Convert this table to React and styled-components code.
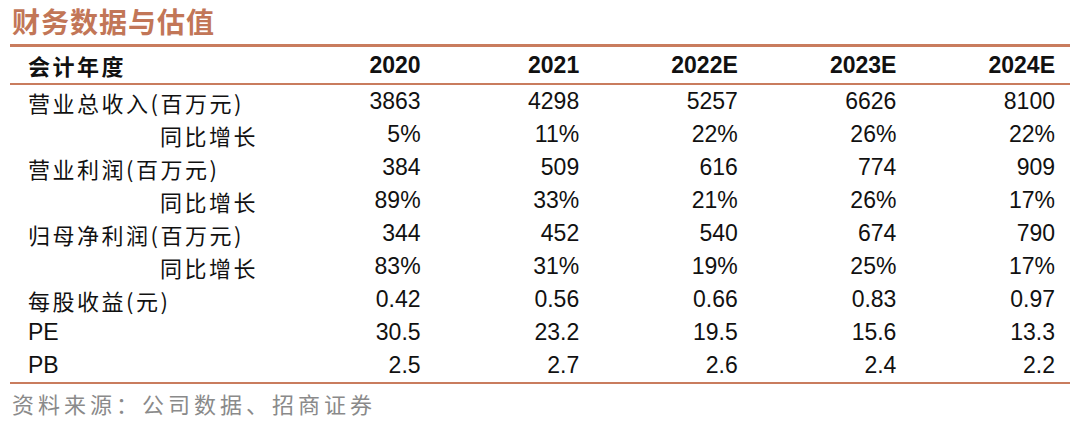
import React from 'react';
import styled, { createGlobalStyle } from 'styled-components';

const GlobalStyle = createGlobalStyle`
  html, body {
    margin: 0;
    padding: 0;
    background: #ffffff;
  }
`;

const Page = styled.div`
  width: 1080px;
  height: 421px;
  padding: 4px 10px 0 10px;
  box-sizing: border-box;
  background: #fff;
  font-family: "Liberation Sans", Arial, "Noto Sans CJK SC", sans-serif;
  color: #111;
`;

const Title = styled.h2`
  margin: 0 0 0 2px;
  height: 40px;
  line-height: 34px;
  font-family: "Noto Sans CJK SC", sans-serif;
  font-size: 28px;
  font-weight: 700;
  letter-spacing: 1px;
  color: #c27657;
`;

const Table = styled.div`
  border-top: 3px solid #c97c5e;
  border-bottom: 2px solid #c97c5e;
`;

const Row = styled.div`
  display: grid;
  grid-template-columns: 252px repeat(5, 1fr);
  padding-right: 15px;
  height: ${p => (p.$head ? '36px' : '33px')};
  align-items: center;
  border-bottom: ${p => (p.$head ? '2px solid #c97c5e' : 'none')};
`;

const Label = styled.div`
  padding-left: ${p => (p.$indent ? '150px' : '18px')};
  font-family: ${p => (p.$latin ? '"Liberation Sans", Arial, sans-serif' : '"Noto Sans CJK SC", sans-serif')};
  font-size: ${p => (p.$latin ? '23px' : '22px')};
  letter-spacing: ${p => (p.$latin ? '0' : '2.5px')};
  font-weight: ${p => (p.$bold ? 700 : 400)};
  white-space: nowrap;
  color: #111;
`;

const Cell = styled.div`
  text-align: right;
  font-size: 23px;
  font-weight: ${p => (p.$bold ? 700 : 400)};
  color: #111;
`;

const Source = styled.div`
  margin-top: 3px;
  padding-left: 2px;
  font-family: "Noto Sans CJK SC", sans-serif;
  font-size: 22px;
  letter-spacing: 4px;
  color: #8a8a8a;
`;

const years = ['2020', '2021', '2022E', '2023E', '2024E'];

const rows = [
  { label: '营业总收入(百万元)', values: ['3863', '4298', '5257', '6626', '8100'] },
  { label: '同比增长', indent: true, values: ['5%', '11%', '22%', '26%', '22%'] },
  { label: '营业利润(百万元)', values: ['384', '509', '616', '774', '909'] },
  { label: '同比增长', indent: true, values: ['89%', '33%', '21%', '26%', '17%'] },
  { label: '归母净利润(百万元)', values: ['344', '452', '540', '674', '790'] },
  { label: '同比增长', indent: true, values: ['83%', '31%', '19%', '25%', '17%'] },
  { label: '每股收益(元)', values: ['0.42', '0.56', '0.66', '0.83', '0.97'] },
  { label: 'PE', latin: true, values: ['30.5', '23.2', '19.5', '15.6', '13.3'] },
  { label: 'PB', latin: true, values: ['2.5', '2.7', '2.6', '2.4', '2.2'] },
];

export default function App() {
  return (
    <Page>
      <GlobalStyle />
      <Title>财务数据与估值</Title>
      <Table>
        <Row $head>
          <Label $bold>会计年度</Label>
          {years.map(y => (
            <Cell key={y} $bold>{y}</Cell>
          ))}
        </Row>
        {rows.map((r, i) => (
          <Row key={i}>
            <Label $indent={r.indent} $latin={r.latin}>{r.label}</Label>
            {r.values.map((v, j) => (
              <Cell key={j}>{v}</Cell>
            ))}
          </Row>
        ))}
      </Table>
      <Source>资料来源：公司数据、招商证券</Source>
    </Page>
  );
}
